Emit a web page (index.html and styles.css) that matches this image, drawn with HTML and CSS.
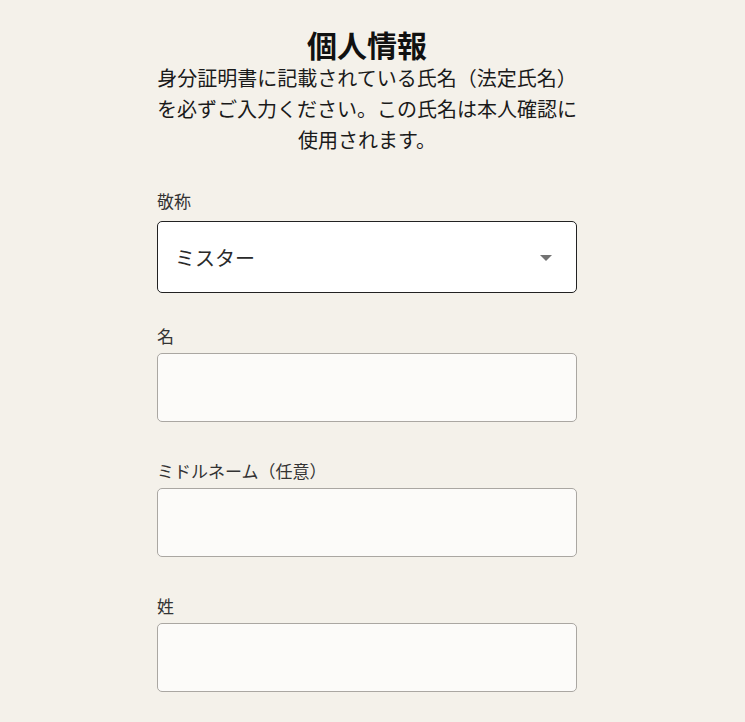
FILE: index.html
```html
<!DOCTYPE html>
<html lang="ja">
<head>
<meta charset="utf-8">
<link rel="stylesheet" href="styles.css">
</head>
<body>
<main class="page">
  <section class="form">
    <h1 class="title">個人情報</h1>
    <p class="intro">身分証明書に記載されている氏名（法定氏名）を必ずご入力ください。この氏名は本人確認に使用されます。</p>
    <div class="field field-select">
      <label class="label">敬称</label>
      <div class="select">
        <span class="select-value">ミスター</span>
        <svg class="caret" width="12" height="6" viewBox="0 0 12 6"><path d="M0 0h12L6 6z" fill="#737373"/></svg>
      </div>
    </div>
    <div class="field">
      <label class="label">名</label>
      <div class="input"></div>
    </div>
    <div class="field">
      <label class="label">ミドルネーム（任意）</label>
      <div class="input"></div>
    </div>
    <div class="field">
      <label class="label">姓</label>
      <div class="input"></div>
    </div>
  </section>
</main>
</body>
</html>
```
FILE: styles.css
```css
html, body {
  margin: 0;
  padding: 0;
  background: #f4f1ea;
}
body {
  font-family: "Noto Sans CJK JP", "Noto Sans", sans-serif;
  color: #1a1a1a;
}
.page {
  display: flex;
  justify-content: flex-start;
  padding: 27px 0 0 157px;
}
.form {
  width: 420px;
  display: flex;
  flex-direction: column;
}
.title {
  margin: 0;
  font-size: 30px;
  line-height: 35px;
  font-weight: 700;
  text-align: center;
  color: #111;
}
.intro {
  margin: 0 0 34px;
  font-size: 20px;
  line-height: 31px;
  text-align: center;
  color: #1a1a1a;
}
.field {
  display: flex;
  flex-direction: column;
  gap: 5px;
  margin-bottom: 37px;
}
.field-select {
  gap: 8px;
  margin-bottom: 31px;
}
.label {
  font-size: 17px;
  line-height: 24px;
  color: #333;
}
.select {
  height: 72px;
  box-sizing: border-box;
  border: 1px solid #222;
  border-radius: 5px;
  background: #fff;
  display: flex;
  align-items: center;
  justify-content: space-between;
  padding: 0 24px 0 17px;
}
.select-value {
  font-size: 20px;
  color: #2a2a2a;
}
.caret {
  margin-top: 2px;
}
.input {
  height: 69px;
  box-sizing: border-box;
  border: 1px solid #aaa7a2;
  border-radius: 5px;
  background: #fcfbf9;
}
```
